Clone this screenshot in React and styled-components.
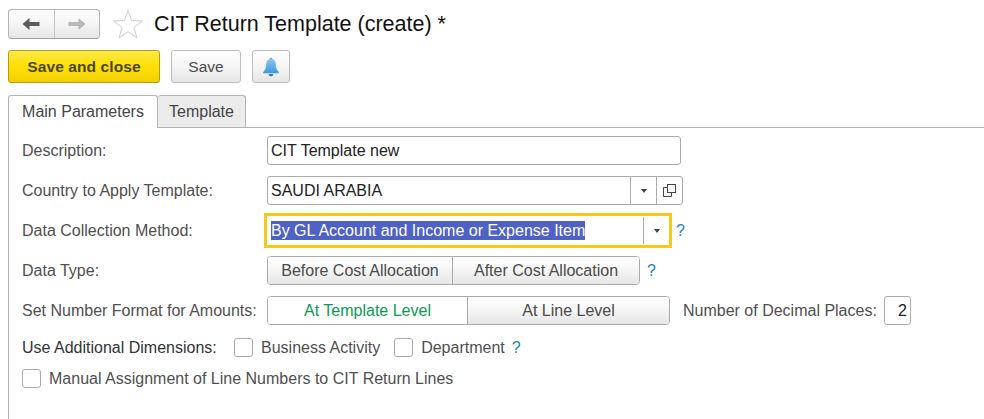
import React from 'react';
import styled, { createGlobalStyle } from 'styled-components';

const GlobalStyle = createGlobalStyle`
  html, body {
    margin: 0;
    padding: 0;
    background: #fff;
    font-family: "Liberation Sans", Arial, sans-serif;
  }
`;

const btnGradient = 'linear-gradient(to bottom, #ffffff 0%, #f6f6f6 45%, #e6e6e6 100%)';

const Page = styled.div`
  width: 984px;
  height: 419px;
  overflow: hidden;
  padding: 9px 0 0 8px;
  box-sizing: border-box;
`;

const TitleBar = styled.div`
  display: flex;
  align-items: center;
  height: 30px;
`;

const NavGroup = styled.div`
  display: flex;
  width: 92px;
  height: 30px;
  box-sizing: border-box;
  border: 1px solid #b4b4b4;
  border-bottom-color: #a0a0a0;
  border-radius: 4px;
  background: ${btnGradient};
`;

const NavButton = styled.div`
  flex: 1;
  display: flex;
  align-items: center;
  justify-content: center;
  & + & {
    border-left: 1px solid #c4c4c4;
  }
`;

const StarIcon = styled.svg`
  width: 32px;
  height: 30px;
  margin-left: 12px;
`;

const Title = styled.h1`
  margin: 0 0 0 10px;
  font-size: 21.5px;
  font-weight: 400;
  color: #111;
  white-space: nowrap;
`;

const CommandBar = styled.div`
  display: flex;
  align-items: center;
  gap: 11px;
  margin-top: 11px;
`;

const CommandButton = styled.div`
  display: flex;
  align-items: center;
  justify-content: center;
  box-sizing: border-box;
  width: ${(p) => p.$width}px;
  height: 33px;
  border-radius: 3px;
  font-size: 15.5px;
  color: #4b4b4b;
  border: 1px solid #bcbcbc;
  background: ${btnGradient};
`;

const PrimaryButton = styled(CommandButton)`
  font-weight: 700;
  letter-spacing: 0.1px;
  color: #4a4533;
  border-color: #b49b10;
  background: linear-gradient(to bottom, #ffe94a 0%, #ffe000 50%, #f2d000 100%);
`;

const TabBar = styled.div`
  display: flex;
  height: 33px;
  box-sizing: border-box;
  margin-top: 12px;
  border-bottom: 1px solid #b4b4b4;
`;

const Tab = styled.div`
  display: flex;
  align-items: center;
  justify-content: center;
  box-sizing: border-box;
  width: ${(p) => p.$width}px;
  height: ${(p) => (p.$active ? 33 : 32)}px;
  font-size: 16px;
  color: #444;
  border: 1px solid #b4b4b4;
  border-radius: 3px 3px 0 0;
  background: ${(p) => (p.$active ? '#fff' : '#ececec')};
  ${(p) => (p.$active ? 'border-bottom: none; position: relative; z-index: 1;' : 'border-left: none; border-bottom: none;')}
`;

const Panel = styled.div`
  height: 292px;
  box-sizing: border-box;
  padding: 8px 0 0 13px;
  border-left: 1px solid #b4b4b4;
  display: flex;
  flex-direction: column;
  gap: 11px;
`;

const Row = styled.div`
  display: flex;
  align-items: center;
  height: 29px;
`;

const CheckRow = styled(Row)`
  height: 23px;
  margin-top: ${(p) => p.$top || 0}px;
`;

const Label = styled.span`
  flex: none;
  width: 245px;
  font-size: 16px;
  color: #4f4f4f;
  white-space: nowrap;
`;

const StrongLabel = styled(Label)`
  width: 212px;
  color: #333;
`;

const Field = styled.div`
  display: flex;
  align-items: stretch;
  box-sizing: border-box;
  width: ${(p) => p.$width}px;
  height: 29px;
  border: 1px solid #ababab;
  border-radius: 3px;
  background: #fff;
`;

const FieldText = styled.span`
  flex: 1;
  padding-left: 3px;
  font-size: 16px;
  line-height: 27px;
  color: #222;
  white-space: nowrap;
`;

const FieldAction = styled.div`
  flex: none;
  display: flex;
  align-items: center;
  justify-content: center;
  width: 25px;
  border-left: 1px solid #ababab;
`;

const FocusField = styled.div`
  display: flex;
  align-items: center;
  box-sizing: border-box;
  width: 408px;
  height: 35px;
  margin: -3px 0 -3px -3px;
  border: 3px solid #f7c81e;
  background: #fff;
`;

const Selected = styled.span`
  margin-left: 4px;
  width: 372px;
  flex: none;
`;

const SelectedText = styled.span`
  background: #4f62c4;
  color: #fff;
  font-size: 16px;
  line-height: 19px;
  display: inline-block;
  white-space: nowrap;
`;

const FocusAction = styled.div`
  flex: none;
  display: flex;
  align-items: center;
  justify-content: center;
  width: 26px;
  height: 27px;
  border-left: 1px solid #ababab;
`;

const Caret = styled.span`
  width: 0;
  height: 0;
  border-left: 3.5px solid transparent;
  border-right: 3.5px solid transparent;
  border-top: 4px solid #444;
`;

const Help = styled.span`
  font-size: 16px;
  color: #1b7fc4;
  margin-left: ${(p) => p.$left}px;
`;

const Segments = styled.div`
  display: flex;
  box-sizing: border-box;
  height: 29px;
  border: 1px solid #ababab;
  border-radius: 4px;
  overflow: hidden;
`;

const Segment = styled.div`
  display: flex;
  align-items: center;
  justify-content: center;
  box-sizing: border-box;
  width: ${(p) => p.$width}px;
  font-size: 16px;
  color: ${(p) => (p.$active ? '#0a9a50' : '#4b4b4b')};
  background: ${(p) => (p.$active ? '#fff' : btnGradient)};
  & + & {
    border-left: 1px solid #ababab;
  }
`;

const InlineLabel = styled.span`
  font-size: 16px;
  color: #4f4f4f;
  white-space: nowrap;
  margin-left: ${(p) => p.$left || 0}px;
`;

const NumberBox = styled.div`
  box-sizing: border-box;
  width: 27px;
  height: 29px;
  margin-left: 7px;
  padding-right: 3px;
  border: 1px solid #ababab;
  border-radius: 3px;
  font-size: 16px;
  line-height: 27px;
  text-align: right;
  color: #222;
`;

const Checkbox = styled.span`
  flex: none;
  box-sizing: border-box;
  width: 19px;
  height: 19px;
  border: 1px solid #ababab;
  border-radius: 3px;
  background: #fff;
  margin-left: ${(p) => p.$left || 0}px;
`;

const ArrowLeft = ({ color }) => (
  <svg width="18" height="14" viewBox="0 0 18 14">
    <path d="M0.5 7 L7.5 1 V5 H17.5 V9 H7.5 V13 Z" fill={color} />
  </svg>
);

const ArrowRight = ({ color }) => (
  <svg width="18" height="14" viewBox="0 0 18 14">
    <path d="M17.5 7 L10.5 1 V5 H0.5 V9 H10.5 V13 Z" fill={color} />
  </svg>
);

const Bell = () => (
  <svg width="18" height="20" viewBox="0 0 18 20">
    <defs>
      <linearGradient id="bellFill" x1="0" y1="0" x2="0" y2="1">
        <stop offset="0" stopColor="#8cc6f2" />
        <stop offset="1" stopColor="#3f97e0" />
      </linearGradient>
    </defs>
    <circle cx="9" cy="2.2" r="1.4" fill="#6aa9d8" />
    <path d="M9 2 C5.5 2 4.2 4.6 4.2 7.6 C4.2 11 3.2 13 1.2 15 V16.2 H16.8 V15 C14.8 13 13.8 11 13.8 7.6 C13.8 4.6 12.5 2 9 2 Z" fill="url(#bellFill)" />
    <path d="M6.6 17 A2.4 2.4 0 0 0 11.4 17 Z" fill="#2f7fc0" />
  </svg>
);

const PopupIcon = () => (
  <svg width="13" height="13" viewBox="0 0 13 13" fill="none" stroke="#444" strokeWidth="1">
    <rect x="4.5" y="0.5" width="8" height="8" />
    <path d="M4.5 3.5 H0.5 V12.5 H8.5 V8.5" />
  </svg>
);

const App = () => (
  <Page>
    <GlobalStyle />
    <TitleBar>
      <NavGroup>
        <NavButton><ArrowLeft color="#5c5c5c" /></NavButton>
        <NavButton><ArrowRight color="#b8b8b8" /></NavButton>
      </NavGroup>
      <StarIcon viewBox="0 0 32 30">
        <path d="M16 1.5 L19.6 11.6 L30.4 11.9 L21.9 18.5 L24.9 28.8 L16 22.7 L7.1 28.8 L10.1 18.5 L1.6 11.9 L12.4 11.6 Z" fill="#fff" stroke="#c9ced4" strokeWidth="1" />
      </StarIcon>
      <Title>CIT Return Template (create) *</Title>
    </TitleBar>

    <CommandBar>
      <PrimaryButton $width={152}>Save and close</PrimaryButton>
      <CommandButton $width={70}>Save</CommandButton>
      <CommandButton $width={38}><Bell /></CommandButton>
    </CommandBar>

    <TabBar>
      <Tab $active $width={150}>Main Parameters</Tab>
      <Tab $width={88}>Template</Tab>
    </TabBar>

    <Panel>
      <Row>
        <Label>Description:</Label>
        <Field $width={414}><FieldText>CIT Template new</FieldText></Field>
      </Row>
      <Row>
        <Label>Country to Apply Template:</Label>
        <Field $width={416}>
          <FieldText>SAUDI ARABIA</FieldText>
          <FieldAction><Caret /></FieldAction>
          <FieldAction><PopupIcon /></FieldAction>
        </Field>
      </Row>
      <Row>
        <Label>Data Collection Method:</Label>
        <FocusField>
          <Selected><SelectedText>By GL Account and Income or Expense Item</SelectedText></Selected>
          <FocusAction><Caret /></FocusAction>
        </FocusField>
        <Help $left={4}>?</Help>
      </Row>
      <Row>
        <Label>Data Type:</Label>
        <Segments>
          <Segment $width={184}>Before Cost Allocation</Segment>
          <Segment $width={187}>After Cost Allocation</Segment>
        </Segments>
        <Help $left={7}>?</Help>
      </Row>
      <Row>
        <Label>Set Number Format for Amounts:</Label>
        <Segments>
          <Segment $active $width={199}>At Template Level</Segment>
          <Segment $width={202}>At Line Level</Segment>
        </Segments>
        <InlineLabel $left={13}>Number of Decimal Places:</InlineLabel>
        <NumberBox>2</NumberBox>
      </Row>
      <CheckRow>
        <StrongLabel>Use Additional Dimensions:</StrongLabel>
        <Checkbox />
        <InlineLabel $left={8}>Business Activity</InlineLabel>
        <Checkbox $left={14} />
        <InlineLabel $left={8}>Department</InlineLabel>
        <Help $left={7}>?</Help>
      </CheckRow>
      <CheckRow $top={-3}>
        <Checkbox />
        <InlineLabel $left={8}>Manual Assignment of Line Numbers to CIT Return Lines</InlineLabel>
      </CheckRow>
    </Panel>
  </Page>
);

export default App;
